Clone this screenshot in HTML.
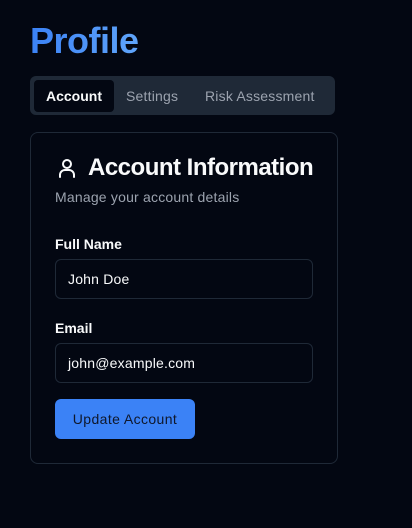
<!DOCTYPE html>
<html><head><style>
*{margin:0;padding:0;box-sizing:border-box}
body{width:412px;height:528px;background:#030712;font-family:"Liberation Sans",sans-serif;position:relative;overflow:hidden;color:#f9fafb}
.a{position:absolute}
h1{position:absolute;left:30px;top:20px;font-size:36px;font-weight:bold;background:linear-gradient(90deg,#3b82f6,#60a5fa);-webkit-background-clip:text;color:transparent;letter-spacing:-0.5px}
.tabs{left:30px;top:76px;width:305px;height:39px;background:#1f2937;border-radius:6px}
.tab{position:absolute;top:4px;height:32px;line-height:32px;font-size:14px;color:#9ca3af;letter-spacing:0.2px}
.act{background:#030712;color:#f9fafb;border-radius:4px;text-align:center;font-weight:bold;letter-spacing:0}
.card{left:30px;top:132px;width:308px;height:332px;border:1px solid #1f2937;border-radius:8px}
.lbl{font-size:14px;font-weight:bold;left:55px}
.inp{left:55px;width:258px;height:40px;border:1px solid #1f2937;border-radius:6px;font-size:14px;line-height:38px;padding-left:12px;letter-spacing:0.2px}
.btn{left:55px;top:399px;width:140px;height:40px;background:#3b82f6;border-radius:6px;color:#0f172a;font-size:14px;line-height:40px;text-align:center;letter-spacing:0.4px}
</style></head><body>
<h1>Profile</h1>
<div class="a tabs">
<div class="tab act" style="left:4px;width:80px">Account</div>
<div class="tab" style="left:96px">Settings</div>
<div class="tab" style="left:175px">Risk Assessment</div>
</div>
<div class="a card"></div>
<svg class="a" style="left:55px;top:156px" width="24" height="24" viewBox="0 0 24 24" fill="none" stroke="#f9fafb" stroke-width="2" stroke-linecap="round"><circle cx="12" cy="8" r="4"/><path d="M5 21v-2a5 5 0 0 1 5-5h4a5 5 0 0 1 5 5v2"/></svg>
<div class="a" style="left:88px;top:154px;font-size:24px;font-weight:bold;letter-spacing:-0.5px">Account Information</div>
<div class="a" style="left:55px;top:189px;font-size:14px;color:#9ca3af;letter-spacing:0.2px">Manage your account details</div>
<div class="a lbl" style="top:236px">Full Name</div>
<div class="a inp" style="top:259px">John Doe</div>
<div class="a lbl" style="top:320px">Email</div>
<div class="a inp" style="top:343px">john@example.com</div>
<div class="a btn">Update Account</div>
</body></html>
